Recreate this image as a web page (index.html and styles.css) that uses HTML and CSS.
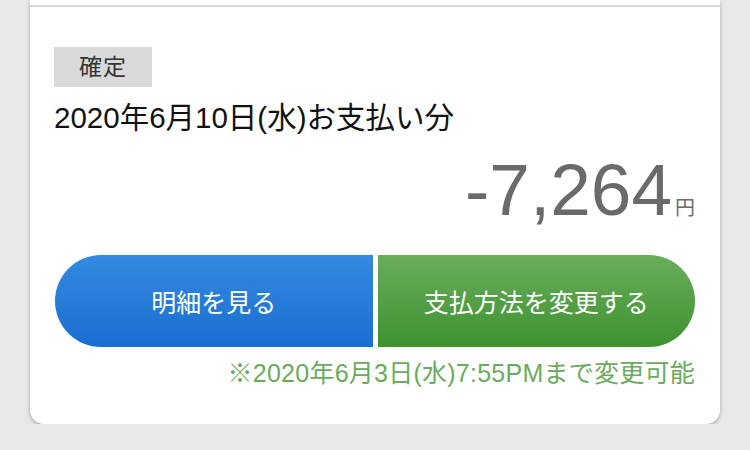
FILE: index.html
```html
<!DOCTYPE html>
<html lang="ja">
<head>
<meta charset="utf-8">
<link rel="stylesheet" href="styles.css">
</head>
<body>
<div class="card">
  <div class="divider"></div>
  <div class="content">
    <div class="badge">確定</div>
    <div class="title">2020年6月10日(水)お支払い分</div>
    <div class="amount"><span class="num">-7,264</span><span class="yen">円</span></div>
    <div class="buttons">
      <div class="btn btn-blue">明細を見る</div>
      <div class="btn btn-green">支払方法を変更する</div>
    </div>
    <div class="notice">※2020年6月3日(水)7:55PMまで変更可能</div>
  </div>
</div>
</body>
</html>
```

FILE: styles.css
```css
html, body {
  margin: 0;
  padding: 0;
  background: #e9e9e9;
  font-family: "Liberation Sans", "Noto Sans CJK JP", sans-serif;
}
.card {
  margin-left: 30px;
  width: 690px;
  background: #fff;
  padding-top: 5px;
  border-radius: 0 0 14px 14px;
  box-shadow: 0 2px 4px rgba(0, 0, 0, 0.28);
}
.divider {
  height: 2px;
  background: #d9d9d9;
}
.content {
  padding: 40px 25px 36px 24px;
}
.badge {
  width: 98px;
  height: 40px;
  line-height: 40px;
  background: #d9d9d9;
  color: #333;
  font-size: 23px;
  letter-spacing: 1px;
  text-align: center;
}
.title {
  margin-top: 11px;
  font-size: 29.5px;
  line-height: 40px;
  color: #111;
}
.amount {
  margin-top: 12px;
  text-align: right;
  color: #6a6a6a;
  line-height: 80px;
  height: 80px;
}
.num {
  font-size: 73px;
}
.yen {
  font-size: 20px;
  margin-left: 3px;
}
.buttons {
  margin-top: 25px;
  display: flex;
  gap: 5px;
  margin-left: 1px;
}
.btn {
  flex: 1;
  height: 92px;
  display: flex;
  align-items: center;
  justify-content: center;
  color: #fff;
  font-size: 25px;
  font-family: "Noto Sans CJK JP", sans-serif;
}
.btn-blue {
  border-radius: 46px 0 0 46px;
  background: linear-gradient(to bottom, #338adf, #1a6ed1);
}
.btn-green {
  border-radius: 0 46px 46px 0;
  background: linear-gradient(to bottom, #6aad5c, #3d922f);
}
.notice {
  margin-top: 11px;
  text-align: right;
  font-size: 25px;
  letter-spacing: 0.25px;
  line-height: 30px;
  color: #6aab5c;
}
```
